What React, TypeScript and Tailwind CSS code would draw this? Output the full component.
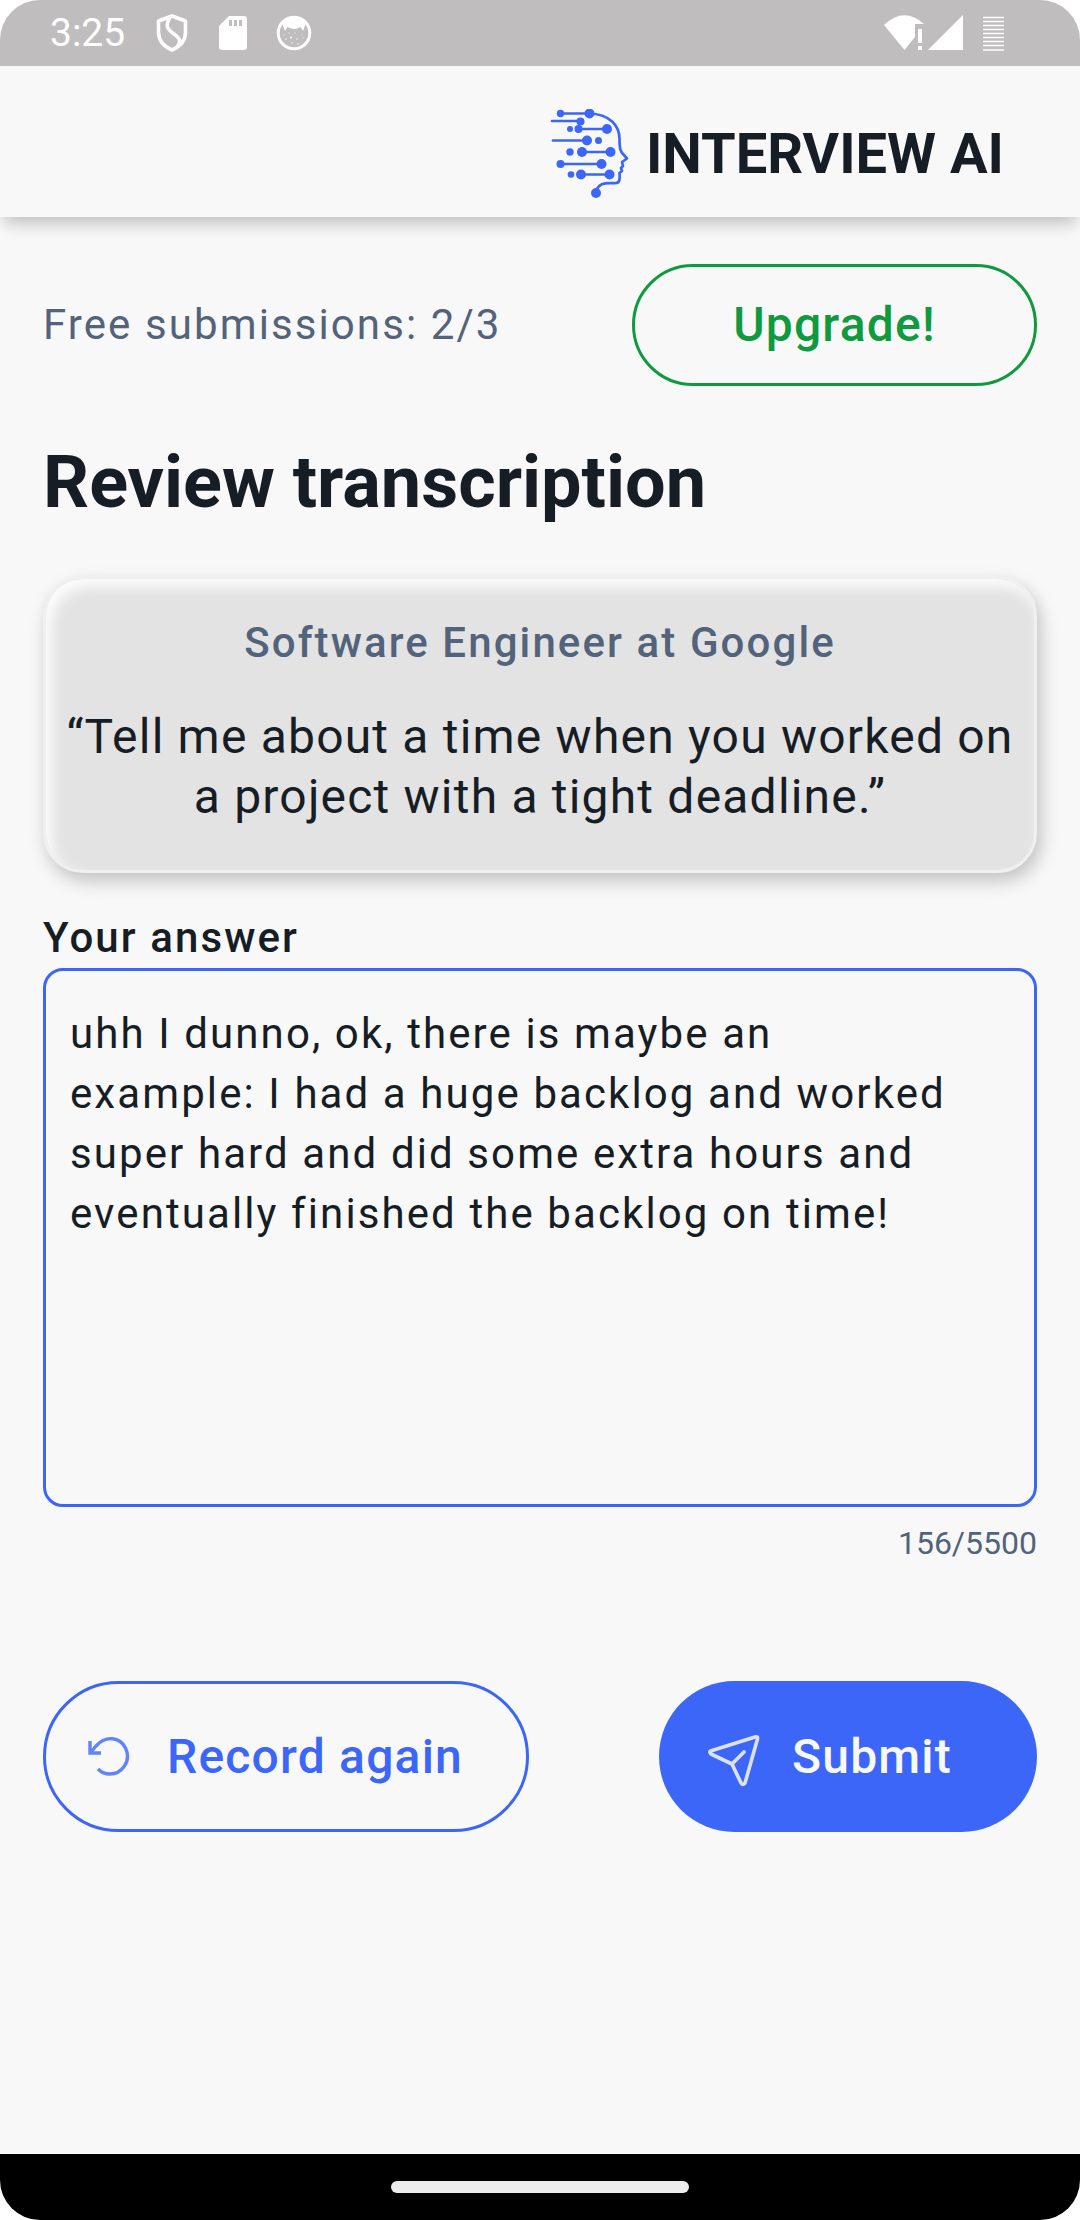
import { useState } from "react";

const INITIAL_ANSWER =
  "uhh I dunno, ok, there is maybe an example: I had a huge backlog and worked super hard and did some extra hours and eventually finished the backlog on time!";

function StatusBar() {
  return (
    <div className="relative z-10 flex h-[66px] items-center justify-between bg-[#bfbdbe] pl-[50px] pr-[76px] text-white">
      <div className="flex items-center">
        <span className="text-[39px] leading-[60px]">3:25</span>
        <svg className="ml-[31px] h-[38px] w-8" viewBox="0 0 32 38" fill="none" stroke="currentColor" strokeWidth="3.6" strokeLinejoin="round">
          <path d="M16 2 L29.500 7 V18 C29.500 27 23 33 16 36 C9 33 2.500 27 2.500 18 V7 Z" />
          <path d="M14 3 C9 12 11 15 18 20 C25 25 25 28 21 33" />
        </svg>
        <svg className="ml-[31px] h-[36px] w-7" viewBox="0 0 28 36">
          <path d="M10 1 H25 Q28 1 28 4 V32 Q28 35 25 35 H3 Q0 35 0 32 V11 Z" fill="currentColor" />
          <path d="M10 5h3v6h-3zM15 5h3v6h-3zM20 5h3v6h-3z" fill="#bfbdbe" />
        </svg>
        <svg className="ml-[29px] h-9 w-9" viewBox="0 0 36 36">
          <circle cx="18" cy="18" r="15.800" fill="none" stroke="currentColor" strokeWidth="3" />
          <path d="M6 8 Q18 -3 30 8 L27 16 L24.500 12 Q18 16 11.500 12 L9 16 Z" fill="currentColor" />
          <g fill="currentColor">
            <circle cx="8" cy="20" r="0.600" /><circle cx="13" cy="18" r="0.600" /><circle cx="19" cy="18" r="0.600" /><circle cx="26" cy="19" r="0.600" />
            <circle cx="10" cy="24" r="0.700" /><circle cx="15" cy="22.500" r="1" /><circle cx="21" cy="24" r="0.700" /><circle cx="27" cy="23" r="0.600" />
            <circle cx="16" cy="28" r="0.700" /><circle cx="22" cy="29" r="0.700" />
          </g>
        </svg>
      </div>
      <div className="flex items-center">
        <svg className="h-9 w-10" viewBox="0 0 40 36" fill="currentColor">
          <path d="M0 10 Q20 -9 40 9 H31 V22 L20.500 35 Z" />
          <path d="M34 14h4v14h-4zM34 31h4v4h-4z" />
        </svg>
        <svg className="ml-1 h-9 w-9" viewBox="0 0 36 36" fill="currentColor">
          <path d="M35 0 V35 H0 Z" />
        </svg>
        <svg className="ml-[19px] h-9 w-[21px]" viewBox="0 0 21 36" stroke="currentColor" strokeWidth="1.300">
          <path d="M0 2.500h21M0 6.500h21M0 10.500h21M0 14.500h21M0 18.500h21M0 22.500h21M0 26.500h21M0 30.500h21M0 35h21" />
        </svg>
      </div>
    </div>
  );
}

function HeadLogo() {
  return (
    <svg className="h-[90px] w-20" viewBox="0 0 80 90" fill="none" stroke="#3b66f7" strokeWidth="2.700" strokeLinecap="round" strokeLinejoin="round">
      <path d="M11 4.500H39M2 12H30M28 20H57M3 31.500H37M32 43H60M10 55H51M31 65.500H59" />
      <path d="M39 4.500 C60 5 69.500 17 69.500 30 C69.500 41 71 43 73 45 L77 49.500 L72 53 L73 57 L71 59 L72 62 L69.500 64 C70 69 70 74 66 74 C60 75 48 71 46 84" />
      <g fill="#3b66f7" stroke="none">
        <circle cx="10.500" cy="4.500" r="3.700" /><circle cx="39.500" cy="4.500" r="5" />
        <circle cx="30.500" cy="12.500" r="4" />
        <circle cx="20" cy="20" r="3" /><circle cx="28.500" cy="20" r="4" /><circle cx="57" cy="20" r="5" />
        <circle cx="37" cy="31.500" r="5" /><circle cx="48.500" cy="31.500" r="3.500" />
        <circle cx="20" cy="43" r="3.700" /><circle cx="32" cy="43" r="5" /><circle cx="60.500" cy="43" r="5" />
        <circle cx="10.500" cy="55" r="4" /><circle cx="51.500" cy="55" r="5" />
        <circle cx="21" cy="65.500" r="3.300" /><circle cx="31" cy="65.500" r="5" /><circle cx="59.500" cy="65.500" r="5" />
        <circle cx="46" cy="84" r="5" />
      </g>
    </svg>
  );
}

export default function App() {
  const [answer, setAnswer] = useState(INITIAL_ANSWER);

  return (
    <div className="min-h-screen bg-white font-['Roboto',sans-serif]">
      <div className="flex min-h-screen flex-col overflow-hidden rounded-[40px] bg-[#f8f8f8] text-[#161d25]">
        <StatusBar />
        <header className="flex h-[151px] items-center justify-end gap-4 pr-[76px] pt-6 shadow-[0_10px_16px_-4px_rgba(0,0,0,0.24)]">
          <HeadLogo />
          <span className="text-[56px] font-bold leading-[72px]">INTERVIEW AI</span>
        </header>

        <main className="flex grow flex-col px-[43px] pt-[47px]">
          <div className="flex items-center justify-between">
            <p className="text-[42px] leading-[60px] tracking-wider text-[#52637b]">Free submissions: 2/3</p>
            <button type="button" className="h-[122px] w-[405px] rounded-full border-3 border-[#109a3f] text-[48px] font-medium leading-[60px] tracking-wide text-[#109a3f]">
              Upgrade!
            </button>
          </div>

          <h1 className="mt-[57px] text-[72px] font-bold leading-[80px]">Review transcription</h1>

          <section className="mt-[53px] rounded-[40px] border-3 border-[#f0f0f0] bg-[#e3e3e3] px-4 pb-[43px] pt-[34px] text-center shadow-[4px_8px_18px_rgba(0,0,0,0.22),inset_6px_8px_14px_rgba(255,255,255,0.9)]">
            <h2 className="text-[42px] font-medium leading-[60px] tracking-wider text-[#52637b]">Software Engineer at Google</h2>
            <p className="mt-[34px] text-[48px] leading-[60px] tracking-wide">
              “Tell me about a time when you worked on a project with a tight deadline.”
            </p>
          </section>

          <label htmlFor="answer" className="mt-[35px] text-[42px] font-medium leading-[60px] tracking-wider">
            Your answer
          </label>
          <textarea
            id="answer"
            value={answer}
            maxLength={5500}
            onChange={(event) => setAnswer(event.target.value)}
            className="block h-[539px] w-full resize-none rounded-[20px] border-3 border-[#3b66f7] bg-transparent py-[33px] pl-6 pr-20 text-[42px] leading-[60px] tracking-wider outline-none"
          />
          <p className="mt-3 text-right text-[32px] leading-[48px] text-[#52637b]">{answer.length}/5500</p>

          <div className="mt-[114px] flex items-center justify-between">
            <button type="button" className="flex h-[151px] w-[486px] items-center rounded-full border-3 border-[#3b66f7] pl-[41px] text-[48px] font-medium tracking-wide text-[#3b66f7]">
              <svg className="h-[42px] w-[44px] shrink-0" viewBox="0 0 44 42" fill="none" stroke="currentColor" strokeWidth="3.400" strokeOpacity="0.8">
                <path d="M3 5 V17 H14 M4 16 L9 10 C19 -1 33 1 38.500 12 C45 26 34 38 23 38 Q16 38 11 33" />
              </svg>
              <span className="ml-[36px]">Record again</span>
            </button>
            <button type="button" className="flex h-[151px] w-[378px] items-center rounded-full bg-[#3b66f7] pl-[48px] text-[48px] font-medium tracking-wide text-[#f8f8f8]">
              <svg className="mt-2 h-[54px] w-[54px] shrink-0" viewBox="0 0 54 54" fill="none" stroke="currentColor" strokeWidth="3.600" strokeOpacity="0.85" strokeLinecap="round" strokeLinejoin="round">
                <path d="M3.500 17 L48 3 Q51 2 50.500 5 L38 49 Q35.500 52 34 49 L25 30 L4 20 Q2 18 3.500 17 Z M25 30 L37 18" />
              </svg>
              <span className="ml-[31px]">Submit</span>
            </button>
          </div>
        </main>

        <footer className="flex h-[66px] items-center justify-center bg-black">
          <div className="h-3 w-[298px] rounded-full bg-[#ececec]" />
        </footer>
      </div>
    </div>
  );
}
